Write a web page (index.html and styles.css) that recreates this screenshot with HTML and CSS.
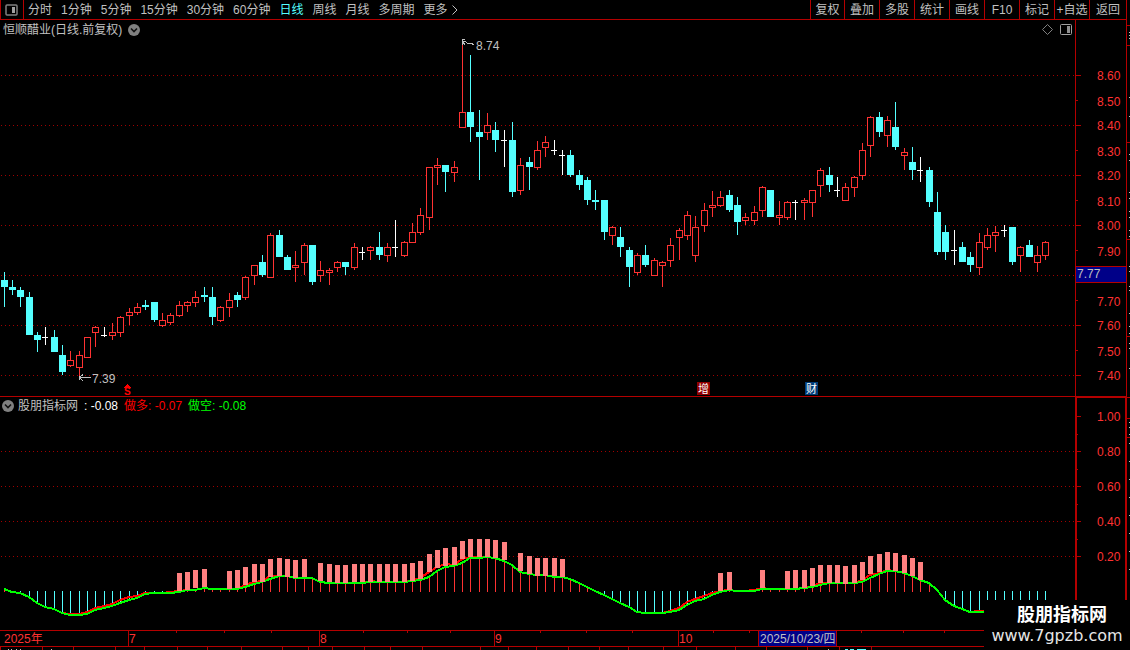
FILE: index.html
```html
<!DOCTYPE html>
<html lang="zh-CN">
<head>
<meta charset="utf-8">
<title>恒顺醋业 日线</title>
<link rel="stylesheet" href="styles.css">
</head>
<body>
<div class="screen">
  <div class="workspace">
    <header class="toolbar">
      <button class="layout-btn" aria-label="布局">
        <svg width="13" height="12" viewBox="0 0 13 12"><rect x="1" y="1" width="11" height="10" rx="1" fill="none" stroke="#808080" stroke-width="1.5"/><rect x="7" y="3" width="3" height="6" fill="#a0a0a0"/></svg>
      </button>
      <nav class="periods">
        <button>分时</button>
        <button>1分钟</button>
        <button>5分钟</button>
        <button>15分钟</button>
        <button>30分钟</button>
        <button>60分钟</button>
        <button class="active">日线</button>
        <button>周线</button>
        <button>月线</button>
        <button>多周期</button>
        <button class="more">更多<svg width="6" height="10" viewBox="0 0 6 10"><path d="M0.5 0.5 5 5 0.5 9.5" fill="none" stroke="#c0c0c0"/></svg></button>
      </nav>
      <div class="tools">
        <button>复权</button>
        <button>叠加</button>
        <button>多股</button>
        <button>统计</button>
        <button>画线</button>
        <button>F10</button>
        <button>标记</button>
        <button>+自选</button>
        <button>返回</button>
      </div>
    </header>

    <section class="panel price">
      <div class="plot">
        <div class="plot-head">
          <span class="stock">恒顺醋业(日线.前复权)</span>
          <button class="chevron" aria-label="展开">
            <svg width="12" height="12" viewBox="0 0 12 12"><circle cx="6" cy="6" r="6" fill="#808080"/><path d="M3 4.5 6 7.5 9 4.5" fill="none" stroke="#101010" stroke-width="1.6"/></svg>
          </button>
          <span class="head-icons">
            <svg width="11" height="11" viewBox="0 0 11 11"><path d="M5.5 0.5 10.5 5.5 5.5 10.5 0.5 5.5Z" fill="none" stroke="#808080"/></svg>
            <svg width="12" height="11" viewBox="0 0 12 11"><rect x="0.5" y="0.5" width="11" height="10" rx="1" fill="none" stroke="#a0a0a0"/><rect x="7" y="2" width="3" height="7" fill="#909090"/></svg>
          </span>
        </div>
        <svg class="canvas" id="price-plot"></svg>
      </div>
      <svg class="axis" id="price-axis"></svg>
    </section>

    <section class="panel indicator">
      <div class="plot">
        <div class="plot-head">
          <button class="chevron" aria-label="指标菜单">
            <svg width="12" height="12" viewBox="0 0 12 12"><circle cx="6" cy="6" r="6" fill="#808080"/><path d="M3 4.5 6 7.5 9 4.5" fill="none" stroke="#101010" stroke-width="1.6"/></svg>
          </button>
          <span class="name">股朋指标网</span>
          <span class="val">: -0.08</span>
          <span class="long">做多: -0.07</span>
          <span class="short">做空: -0.08</span>
        </div>
        <svg class="canvas" id="wave-plot"></svg>
      </div>
      <svg class="axis" id="wave-axis"></svg>
    </section>

    <svg class="timeline" id="timeline"></svg>
    <svg class="strip" id="strip"></svg>
  </div>
  <svg class="rail" id="rail"></svg>
  <div class="brand"><strong>股朋指标网</strong><span>www.7gpzb.com</span></div>
</div>
<script src="chart.js"></script>
</body>
</html>
```

FILE: styles.css
```css
* { box-sizing: border-box; }

html, body { height: 100%; margin: 0; }

body {
  background: #000;
  color: #c0c0c0;
  font: 12px/16px "Liberation Sans", "Noto Sans CJK SC", sans-serif;
  overflow: hidden;
}

button {
  margin: 0;
  padding: 0;
  border: 0;
  background: none;
  color: inherit;
  font: inherit;
  white-space: nowrap;
  cursor: pointer;
}

svg { display: block; }

.screen {
  position: relative;
  display: flex;
  height: 100%;
}

.workspace {
  flex: 1;
  min-width: 0;
  display: flex;
  flex-direction: column;
}

.toolbar {
  display: flex;
  height: 20px;
  border-bottom: 1px solid #b40000;
}

.layout-btn {
  display: flex;
  align-items: center;
  justify-content: center;
  width: 24px;
  padding-right: 2px;
  border-left: 1px solid #b40000;
  border-right: 1px solid #b40000;
}

.periods {
  flex: 1;
  display: flex;
  align-items: center;
  gap: 9px;
  padding-left: 4px;
}

.periods .active { color: #54ffff; }

.more {
  display: flex;
  align-items: center;
  gap: 4px;
}

.tools { display: flex; }

.tools button {
  width: 35px;
  border-left: 1px solid #b40000;
}

.tools button:first-child { width: 34px; }
.tools button:last-child { width: 37px; }

.panel { display: flex; min-height: 0; }
.price { flex: 377 0 0; border-bottom: 1px solid #b40000; }
.indicator { flex: 233 0 0; }

.plot {
  flex: 1;
  min-width: 0;
  display: flex;
  flex-direction: column;
}

.plot-head {
  display: flex;
  align-items: center;
  gap: 6px;
  height: 19px;
  padding: 0 3px;
}

.indicator .plot-head {
  height: 17px;
  padding: 0 2px;
}

.indicator .chevron { width: 10px; }

.head-icons {
  display: flex;
  align-items: center;
  gap: 7px;
  margin-left: auto;
}

.val { color: #fff; }
.long { color: #f00; }
.short { color: #0f0; }

.canvas {
  flex: 1;
  min-height: 0;
  width: 100%;
}

.axis {
  width: 51px;
  height: 100%;
  border-left: 1px solid #b40000;
}

.indicator .axis {
  border: solid #b40000;
  border-width: 1px 1px 0 2px;
}

.timeline {
  width: 100%;
  height: 17px;
  border-top: 1px solid #b40000;
  border-bottom: 1px solid #b40000;
}

.strip { width: 100%; height: 3px; }

.rail {
  width: 4px;
  height: 100%;
  border-left: 1px solid #b40000;
}

.crisp { shape-rendering: crispEdges; }
.scale { fill: #ff3232; }
.note { fill: #c0c0c0; }

.brand {
  position: absolute;
  right: 0;
  bottom: 0;
  display: flex;
  flex-direction: column;
  align-items: center;
  width: 146px;
  height: 50px;
  background: #000;
  color: #fff;
}

.brand strong {
  padding-left: 10px;
  font: bold 18px/26px "Noto Sans CJK SC", sans-serif;
}

.brand span {
  font: 16px/19px "DejaVu Sans", sans-serif;
  color: #e6e6e6;
}
```

FILE: chart.js
```js
const NS = "http://www.w3.org/2000/svg";
const RED = "#ff3232", CYAN = "#54ffff", LINE = "#b40000", GRID = "#a00000";

function el(parent, name, attrs, text) {
  const node = document.createElementNS(NS, name);
  for (const key in attrs) node.setAttribute(key, attrs[key]);
  if (text !== undefined) node.textContent = text;
  parent.appendChild(node);
  return node;
}
const group = (id, dx, dy) =>
  el(document.getElementById(id), "g", { class: "crisp", transform: `translate(${dx},${dy})` });
const rect = (g, x, y, w, h, fill) => el(g, "rect", { x, y, width: w, height: h, fill });
const label = (g, x, y, text, cls) => el(g, "text", { x, y, class: cls || "scale" }, text);
const dots = (g, y) => el(g, "line", {
  x1: 1, x2: "100%", y1: y + 0.5, y2: y + 0.5, stroke: GRID, "stroke-dasharray": "1 3"
});
const dayX = i => Math.floor(4 + i * 25 / 3);

/* kind, high, body top, body bottom, low; w = open equals close */
const candles = `
c 272 280 287 307|c 280 287 290 295|c 287 290 297 307|c 292 297 335 335|c 332 335 340 352
w 327 337 338 345|c 330 337 352 352|c 345 355 372 375|r 351 360 366 367|r 351 355 368 376
r 337 337 358 358|r 326 327 333 347|w 327 335 336 337|r 323 332 336 340|r 316 317 333 337
r 308 312 316 325|r 303 307 313 315|c 300 305 307 310|c 302 302 320 322|r 313 320 326 327
r 313 315 323 325|r 301 305 316 317|r 301 302 306 312|r 291 297 303 307|c 287 295 297 302
c 287 297 317 325|r 306 307 321 322|r 293 300 308 317|c 292 295 300 307|r 276 277 298 300
r 265 265 276 285|c 255 262 275 277|r 233 235 278 278|c 230 235 257 257|c 255 257 270 270
r 251 265 268 282|r 243 245 263 275|c 245 245 282 285|r 261 270 276 282|r 268 270 273 285
r 261 262 268 272|c 262 262 267 275|r 243 247 268 270|w 247 252 253 260|r 246 247 251 260
c 232 247 255 260|r 243 247 256 262|w 220 247 248 257|r 241 242 256 257|r 223 232 243 243
r 208 215 233 235|r 167 167 218 230|r 158 165 168 185|c 165 165 172 192|r 161 167 173 182
r 43 112 128 128|c 55 112 127 142|c 110 132 137 180|r 113 125 133 140|c 122 130 140 152
w 130 140 141 167|c 122 140 192 197|r 158 165 191 195|c 157 162 167 190|r 141 150 168 170
r 136 142 148 157|w 140 150 151 155|w 150 155 156 175|c 150 155 175 177|c 170 175 185 190
c 177 180 200 205|c 190 200 202 210|c 200 200 232 240|r 226 227 236 245|c 227 237 247 257
c 247 250 267 287|r 253 255 273 275|c 245 255 265 267|r 258 260 276 276|r 261 262 266 287
r 238 245 261 267|r 228 230 238 260|r 211 215 236 240|r 216 227 256 262|r 203 210 226 232
r 191 205 208 217|r 191 197 206 207|c 190 195 210 212|c 197 205 222 235|r 213 217 221 225
r 206 212 221 225|r 186 187 211 217|c 190 190 217 217|r 201 215 218 225|r 201 202 218 220
w 200 202 203 220|r 198 200 203 220|r 190 190 203 217|r 168 170 186 197|c 167 175 185 192
w 177 190 191 197|r 183 187 201 201|r 176 177 188 197|r 143 150 176 180|r 116 117 146 157
c 112 117 132 137|r 116 120 136 147|c 102 127 147 150|r 148 152 156 170|c 147 162 170 180
w 157 170 171 182|c 167 170 202 207|c 192 212 252 255|c 225 232 252 260|w 230 250 251 265
c 242 247 262 262|c 252 257 265 272|r 233 242 268 275|r 228 235 248 250|r 226 232 236 252
w 225 230 231 237|c 227 227 262 265|r 246 247 256 272|c 240 245 257 257|r 246 255 263 272
r 241 242 256 260`.trim().split(/[|\n]/).map(row => {
  const [kind, ...v] = row.split(" ");
  return [kind, ...v.map(Number)];
});

/* price plot */
const price = group("price-plot", 0, -39);
for (let y = 75; y <= 375; y += 50) dots(price, y);
candles.forEach(([kind, high, top, bottom, low], i) => {
  const x = dayX(i);
  if (kind === "r") {
    rect(price, x, high, 1, top - high, RED);
    rect(price, x, bottom, 1, low - bottom, RED);
    el(price, "rect", { x: x - 2.5, y: top + 0.5, width: 6, height: bottom - top - 1, fill: "#000", stroke: RED });
  } else {
    const color = kind === "c" ? CYAN : "#fff";
    rect(price, x, high, 1, low - high, color);
    rect(price, x - 3, top, kind === "c" ? 7 : 6, bottom - top, color);
  }
});
el(price, "path", { d: "M462.5 45V39.5H465M462 41.5H465L468 43.5H471L474 44.5M463 42L465 45", fill: "none", stroke: "#c0c0c0" });
label(price, 476, 50, "8.74", "note");
el(price, "path", { d: "M79 377.5H91M79.5 376V380M80 377L83 374.5M80 378L83 381", fill: "none", stroke: "#c0c0c0" });
label(price, 92, 383, "7.39", "note");

/* event marks on the lower edge */
el(price, "path", { d: "M124 387.5H131L127.5 384Z", fill: "#f00" });
label(price, 124, 395, "S").setAttribute("style", "fill:#f00;font-size:10px;font-weight:bold");
rect(price, 697, 382, 13, 13, "#900000");
label(price, 698, 393, "增").setAttribute("style", "fill:#fff;font-size:11px");
rect(price, 805, 382, 13, 13, "#003c78");
label(price, 806, 393, "财").setAttribute("style", "fill:#fff;font-size:11px");

/* price scale */
const pAxis = group("price-axis", -1076, -20);
for (let y = 75, n = 0; y <= 375; y += 25, n++) {
  rect(pAxis, 1076, y, n % 2 ? 2 : 5, 1, LINE);
  if (n !== 8) label(pAxis, 1097, y + 5 + n % 2, (8.6 - n / 10).toFixed(2));
}
rect(pAxis, 1076, 266, 50, 17, "#000088");
rect(pAxis, 1076, 266, 50, 1, LINE);
rect(pAxis, 1076, 282, 50, 1, LINE);
label(pAxis, 1077, 278, "7.77", "note");

/* indicator: lower line, and how far the upper one lies above it */
const lower = [
  589,592,593,597,603,607,609,613,615,615,614,610,608,606,603,600,598,594,593,593,593,
  592,590,590,588,589,589,589,589,587,584,582,579,576,576,578,578,578,582,583,583,583,
  583,583,582,582,582,582,582,581,580,577,571,567,566,563,558,558,557,558,561,565,572,
  574,575,575,577,577,579,583,587,591,595,599,603,607,612,613,613,613,612,610,605,601,
  599,595,592,590,591,591,591,589,589,589,589,589,588,587,585,583,583,583,583,582,578,
  574,571,571,573,576,580,583,590,600,606,609,612,612,612,611,610,609,608,607,606,605];
const lift = {
  8:1,9:1,10:2,11:2,12:2,13:2,14:3,15:3,16:2,17:1,20:1,21:1,29:2,30:2,31:1,32:3,44:1,
  49:1,50:2,51:5,52:4,53:3,54:1,55:4,56:1,57:1,80:1,81:2,82:3,83:2,84:3,85:2,86:1,
  90:1,91:1,97:1,98:2,103:2,104:3,105:1,106:1,117:1,118:1,119:2,120:2 };
const barTops = {
  21:[573,572,570,569], 27:[571,570,567,564,564,559,558,559,560,559],
  38:[563,564,565,565,564,564,564,564,564,564,564,563,561,554,550,548,547,541,539,539,539,540,542],
  62:[553,556,558,558,558,559], 86:[573,572], 91:[570],
  94:[571,570,570,568,565,565,565,566,565,562,556,554,552,553,555,558,562] };

const wave = group("wave-plot", 0, -414);
for (let y = 451; y <= 556; y += 35) dots(wave, y);
lower.forEach((y, i) => {
  if (y < 591) rect(wave, dayX(i), y, 1, 592 - y, RED);
  else rect(wave, dayX(i), 591, 1, y - 591, CYAN);
});
const points = up => lower.map((y, i) => `${dayX(i)},${y - (up ? lift[i] || 0 : 0)}`).join(" ");
el(wave, "polyline", { points: points(true), fill: "none", stroke: "#f00", "stroke-width": 2 });
el(wave, "polyline", { points: points(false), fill: "none", stroke: "#0f0", "stroke-width": 2 });
for (const start in barTops) {
  barTops[start].forEach((top, k) => rect(wave, dayX(+start + k) - 2, top, 5, 18, "#ff8080"));
}

const wAxis = group("wave-axis", -1077, -398);
for (let n = 0; n < 5; n++) {
  rect(wAxis, 1077, 416 + n * 35, 4, 1, LINE);
  if (n < 4) rect(wAxis, 1077, 434 + n * 35, 1, 1, LINE);
  label(wAxis, 1097, 421 + n * 35, (1 - n * 0.2).toFixed(2));
}

/* dates */
const time = group("timeline", 0, -631);
[176,224,271,363,407,450,540,586,632,713,749,861,903,944].forEach(x => rect(time, x, 631, 1, 2, LINE));
label(time, 4, 643, "2025年");
[[128,"7"],[319,"8"],[494,"9"],[678,"10"]].forEach(([x, text]) => {
  rect(time, x, 631, 1, 15, LINE);
  label(time, x + 1, 643, text);
});
rect(time, 758, 631, 79, 15, LINE);
rect(time, 759, 631, 77, 15, "#000088");
label(time, 760, 643, "2025/10/23/四", "note");

const strip = group("strip", 0, 0);
[0,42,73,115,144,177,207,241,282,308,332,364,390,422,480,508,536,568,599,628,663,696,735,766,807,839,871]
  .forEach(x => rect(strip, x, 0, 1, 3, LINE));
[8,11,16,20,51,828].forEach(x => rect(strip, x, 2, 1, 1, "#c0c0c0"));
rect(strip, 845, 2, 3, 1, CYAN);
rect(strip, 850, 2, 4, 1, CYAN);
rect(strip, 857, 2, 9, 1, CYAN);

/* edge of the quote column on the right */
const rail = group("rail", 0, 0);
[25,45,142,239,336,397,418,437].forEach(y => rect(rail, 0, y, 3, 1, LINE));
[32,35,38,97,116,154,160,192,198,211,217,230,236,266,271,286,290,313,326,333,343,348,368,422,427,434,
 443,461,479,497,515,533,551,569].forEach(y => rect(rail, 2, y, 1, 1, "#c0c0c0"));
```
